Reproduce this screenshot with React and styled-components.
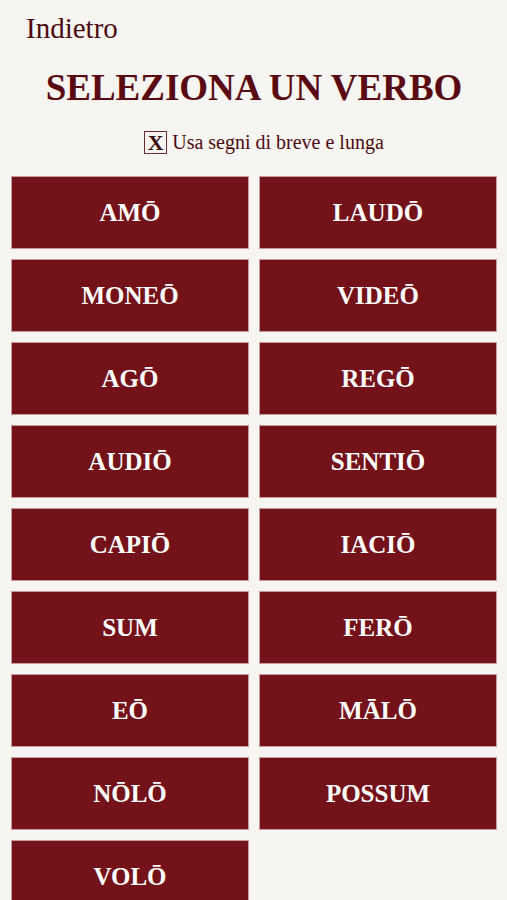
import React, { useState } from 'react';
import styled, { createGlobalStyle } from 'styled-components';

const GlobalStyle = createGlobalStyle`
  html, body {
    margin: 0;
    padding: 0;
    background: #f7f5f1;
  }
  body {
    font-family: "Liberation Serif", "DejaVu Serif", serif;
  }
`;

const Page = styled.div`
  padding: 10px 10px 0 11px;
  display: flex;
  flex-direction: column;
`;

const BackLink = styled.a`
  align-self: flex-start;
  margin-left: 15px;
  font-size: 29px;
  line-height: 36px;
  color: #4d0b10;
  text-decoration: none;
  cursor: pointer;
`;

const Title = styled.h1`
  margin: 20px 0 0;
  text-align: center;
  font-size: 37px;
  line-height: 44px;
  font-weight: 700;
  color: #5a0b11;
`;

const OptionRow = styled.label`
  display: flex;
  align-items: center;
  justify-content: center;
  gap: 5px;
  margin-top: 21px;
  padding-left: 20px;
  font-size: 20px;
  color: #4d0b10;
  cursor: pointer;
`;

const Box = styled.span`
  width: 21px;
  height: 21px;
  border: 1px solid #6a2a2e;
  display: flex;
  align-items: center;
  justify-content: center;
  font-weight: 700;
  font-size: 22px;
  line-height: 1;
  color: #3a0a0d;
  background: #f7f5f1;
`;

const Grid = styled.div`
  display: grid;
  grid-template-columns: 1fr 1fr;
  gap: 10px;
  margin-top: 22px;
`;

const VerbButton = styled.button`
  height: 73px;
  border: 1px solid #c99a9c;
  background: #74121a;
  color: #fff;
  font-family: "Liberation Serif", "DejaVu Serif", serif;
  font-weight: 700;
  font-size: 25px;
  padding: 0;
  cursor: pointer;
`;

const verbs = [
  'AMŌ', 'LAUDŌ', 'MONEŌ', 'VIDEŌ', 'AGŌ', 'REGŌ', 'AUDIŌ', 'SENTIŌ',
  'CAPIŌ', 'IACIŌ', 'SUM', 'FERŌ', 'EŌ', 'MĀLŌ', 'NŌLŌ', 'POSSUM', 'VOLŌ',
];

export default function App() {
  const [marks, setMarks] = useState(true);
  return (
    <>
      <GlobalStyle />
      <Page>
        <BackLink>Indietro</BackLink>
        <Title>SELEZIONA UN VERBO</Title>
        <OptionRow onClick={() => setMarks(!marks)}>
          <Box>{marks ? 'X' : ''}</Box>
          Usa segni di breve e lunga
        </OptionRow>
        <Grid>
          {verbs.map((v) => (
            <VerbButton key={v}>{v}</VerbButton>
          ))}
        </Grid>
      </Page>
    </>
  );
}
